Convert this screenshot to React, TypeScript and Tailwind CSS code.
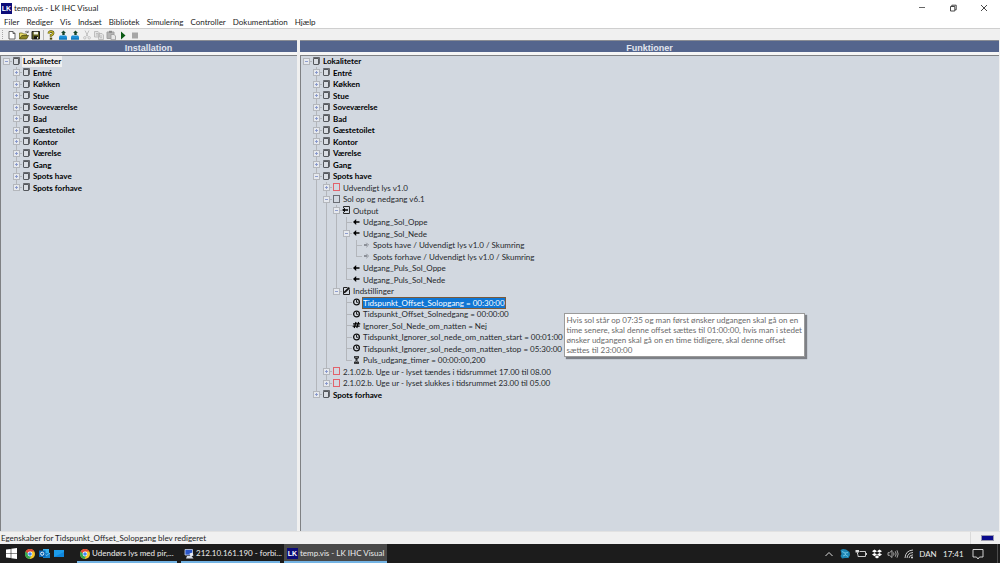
import React, { useState } from "react";

type IconName = "place" | "red" | "block" | "output" | "settings" | "arrow" | "link" | "clock" | "flag" | "timer";

interface TreeNode {
  id: string;
  label: string;
  icon: IconName;
  bold?: boolean;
  hint?: string[];
  children?: TreeNode[];
  expandable?: boolean;
}

interface Row {
  node: TreeNode;
  guides: boolean[];
  last: boolean;
}

const place = (label: string, extra: Partial<TreeNode> = {}): TreeNode => ({
  id: label,
  label,
  icon: "place",
  bold: true,
  expandable: true,
  ...extra,
});

const leaf = (label: string, icon: IconName, extra: Partial<TreeNode> = {}): TreeNode => ({
  id: label,
  label,
  icon,
  ...extra,
});

const roomNames = ["Entré", "Køkken", "Stue", "Soveværelse", "Bad", "Gæstetoilet", "Kontor", "Værelse", "Gang"];

const installation: TreeNode = place("Lokaliteter", {
  children: [...roomNames, "Spots have", "Spots forhave"].map((name) => place(name)),
});

const functions: TreeNode = place("Lokaliteter", {
  children: [
    ...roomNames.map((name) => place(name)),
    place("Spots have", {
      children: [
        leaf("Udvendigt lys v1.0", "red", { expandable: true }),
        leaf("Sol op og nedgang v6.1", "block", {
          children: [
            leaf("Output", "output", {
              children: [
                leaf("Udgang_Sol_Oppe", "arrow"),
                leaf("Udgang_Sol_Nede", "arrow", {
                  children: [
                    leaf("Spots have / Udvendigt lys v1.0 / Skumring", "link"),
                    leaf("Spots forhave / Udvendigt lys v1.0 / Skumring", "link"),
                  ],
                }),
                leaf("Udgang_Puls_Sol_Oppe", "arrow"),
                leaf("Udgang_Puls_Sol_Nede", "arrow"),
              ],
            }),
            leaf("Indstillinger", "settings", {
              children: [
                leaf("Tidspunkt_Offset_Solopgang = 00:30:00", "clock", {
                  hint: [
                    "Hvis sol står op 07:35 og man først ønsker udgangen skal gå on en",
                    "time senere, skal denne offset sættes til 01:00:00, hvis man i stedet",
                    "ønsker udgangen skal gå on en time tidligere, skal denne offset",
                    "sættes til 23:00:00",
                  ],
                }),
                leaf("Tidspunkt_Offset_Solnedgang = 00:00:00", "clock"),
                leaf("Ignorer_Sol_Nede_om_natten = Nej", "flag"),
                leaf("Tidspunkt_Ignorer_sol_nede_om_natten_start = 00:01:00", "clock"),
                leaf("Tidspunkt_Ignorer_sol_nede_om_natten_stop = 05:30:00", "clock"),
                leaf("Puls_udgang_timer = 00:00:00,200", "timer"),
              ],
            }),
          ],
        }),
        leaf("2.1.02.b. Uge ur - lyset tændes i tidsrummet 17.00 til 08.00", "red", { expandable: true }),
        leaf("2.1.02.b. Uge ur - lyset slukkes i tidsrummet 23.00 til 05.00", "red", { expandable: true }),
      ],
    }),
    place("Spots forhave"),
  ],
});

function flatten(node: TreeNode, closed: Set<string>, guides: boolean[] = [], last = true, level = 0): Row[] {
  const rows: Row[] = [{ node, guides, last }];
  const childGuides = level === 0 ? [false] : [...guides, !last];
  if (node.children && !closed.has(node.id)) {
    node.children.forEach((child, i, all) =>
      rows.push(...flatten(child, closed, childGuides, i === all.length - 1, level + 1)),
    );
  }
  return rows;
}

function NodeIcon({ name }: { name: IconName }) {
  return (
    <svg viewBox="1 0 9 10" className="h-[10px] w-[9px] shrink-0" fill="none" aria-hidden="true">
      {name === "place" && (
        <>
          <path d="M2.5 2.5V1.5H8.5V7.5L7.5 8.5V2.5" fill="#8b8e93" stroke="#66696e" />
          <rect x="2.5" y="2.5" width="5" height="6" rx=".4" fill="#d9dde3" stroke="#55585d" />
        </>
      )}
      {name === "red" && <rect x="2.5" y="1.500" width="6" height="7" stroke="#e2626b" />}
      {name === "block" && <rect x="2.5" y="1.500" width="6" height="7" stroke="#6a6d74" />}
      {name === "output" && (
        <>
          <path d="M2.5 3V1.5H8.500V8.500H2.500V7" stroke="#2a2a2a" />
          <path d="M1 5 4 2.700V4.200H7V5.800H4V7.300Z" fill="#000" />
        </>
      )}
      {name === "settings" && (
        <>
          <path d="M6.500 1.500H2.500V8.500H8.500V3.500" stroke="#222" />
          <path d="M2.500 7.500 3.400 5.300 7.700 1 9 2.300 4.700 6.600Z" fill="#111" />
        </>
      )}
      {name === "arrow" && <path d="M2 5 5.200 2V4.200H8.500V5.800H5.200V8Z" fill="#000" />}
      {name === "link" && (
        <path d="M3 4.500H6M3 5.500H6M5.300 2.800 7.500 5 5.300 7.200" stroke="#5d6066" strokeWidth=".6" />
      )}
      {name === "clock" && (
        <>
          <circle cx="5.500" cy="5" r="2.900" stroke="#111" strokeWidth="1.300" />
          <path d="M5.500 3V5.300H7.300" stroke="#111" strokeWidth=".9" />
        </>
      )}
      {name === "flag" && (
        <path d="M5 2 3.200 8M7.600 2 5.800 8M2.100 3.800H9.200M1.600 6.200H8.700" stroke="#000" strokeWidth="1.200" />
      )}
      {name === "timer" && (
        <>
          <path d="M3 1.800H8M3 8.200H8" stroke="#111" strokeWidth="1.200" />
          <path d="M3.700 2V3L5.500 5 3.700 7V8M7.300 2V3L5.500 5 7.300 7V8" stroke="#111" strokeWidth=".9" />
          <path d="M4 3H7L5.500 5ZM4 8 5.500 6.200 7 8Z" fill="#222" />
        </>
      )}
    </svg>
  );
}

function Branch({ row, open, onToggle }: { row: Row; open: boolean; onToggle: () => void }) {
  const root = row.guides.length === 0;
  const hasToggle = row.node.expandable || row.node.children;
  return (
    <span className="grid w-[10px] shrink-0 grid-cols-1 grid-rows-1">
      <span className="col-start-1 row-start-1 flex">
        <span className="w-[4px]" />
        <span className={`w-px ${root ? "" : "bg-[#b3b6bb]"} ${row.last ? "h-[6px]" : "h-full"}`} />
        <span className="mt-[5px] h-px w-[5px] bg-[#b3b6bb]" />
      </span>
      {hasToggle && (
        <button
          type="button"
          aria-label={`${open ? "Skjul" : "Vis"} ${row.node.label}`}
          onClick={onToggle}
          className="col-start-1 row-start-1 mt-[2px] ml-px flex size-[7px] items-center justify-center border border-[#b4b7bc] bg-[#e6e9ee]"
        >
          <svg viewBox="0 0 5 5" className="size-[5px]" aria-hidden="true">
            <path d={open ? "M1 2.500H4" : "M1 2.500H4M2.500 1V4"} stroke="#8595ca" strokeWidth=".9" />
          </svg>
        </button>
      )}
    </span>
  );
}

function Tree({ root, label, initial, highlight }: { root: TreeNode; label: string; initial: string; highlight: string }) {
  const [closed, setClosed] = useState<Set<string>>(new Set());
  const [selected, setSelected] = useState(initial);
  const toggle = (id: string) =>
    setClosed((prev) => {
      const next = new Set(prev);
      if (!next.delete(id)) next.add(id);
      return next;
    });

  return (
    <ul role="tree" aria-label={label} className="pl-px">
      {flatten(root, closed).map((row) => {
        const { node, guides } = row;
        const isSelected = node.id === selected;
        const open = !!node.children && !closed.has(node.id);
        return (
          <li
            key={node.id + guides.length}
            role="treeitem"
            aria-selected={isSelected}
            aria-level={guides.length + 1}
            className="flex whitespace-nowrap odd:h-[11px] even:h-[12px]"
          >
            {guides.map((line, i) => (
              <span key={i} className="flex w-[10px] shrink-0 pl-[4px]">
                {line && <span className="w-px bg-[#b3b6bb]" />}
              </span>
            ))}
            <Branch row={row} open={open} onToggle={() => toggle(node.id)} />
            <NodeIcon name={node.icon} />
            <button
              type="button"
              onClick={() => setSelected(node.id)}
              className={`ml-px px-px leading-[11px] ${node.bold ? "font-bold text-black" : ""} ${
                isSelected ? highlight : node.bold ? "" : "text-[#26282c]"
              }`}
            >
              {node.label}
            </button>
            {isSelected && node.hint && (
              <div className="relative">
                <div
                  role="tooltip"
                  className="absolute top-[16px] left-[58px] border border-[#9a9a9a] bg-white px-[2px] py-px text-[#6a6a6a] shadow-[2px_2px_1px_#7d8086]"
                >
                  {node.hint.map((line) => (
                    <p key={line} className="leading-[10px]">
                      {line}
                    </p>
                  ))}
                </div>
              </div>
            )}
          </li>
        );
      })}
    </ul>
  );
}

function Pane({ title, className, children }: { title: string; className: string; children: React.ReactNode }) {
  return (
    <section className={`flex flex-col ${className}`}>
      <h2 className="h-[12px] border-t border-[#8a8d94] bg-[#54658d] text-center font-['Liberation_Sans',sans-serif] text-[9px] leading-[14px] font-bold text-[#e2e6ef]">
        {title}
      </h2>
      <div className="h-[3px] bg-[#f6f6f6]" />
      <div className="flex-1 border-t border-l border-[#7f8184] bg-[#d2d8e0]">{children}</div>
    </section>
  );
}

function LkLogo({ className }: { className: string }) {
  return (
    <span
      aria-hidden="true"
      className={`flex shrink-0 items-center justify-center bg-[#0c0c78] font-['Liberation_Sans',sans-serif] text-[7px] leading-none font-bold text-white ${className}`}
    >
      LK
    </span>
  );
}

function ChromeIcon() {
  return (
    <svg viewBox="0 0 20 20" className="size-[10px] shrink-0" aria-hidden="true">
      <circle cx="10" cy="10" r="10" fill="#f7c52b" />
      <path d="M1.300 5A10 10 0 0 0 9 20L13.500 12 10 10Z" fill="#35a552" />
      <path d="M1.300 5A10 10 0 0 1 18.700 5H10L6 9Z" fill="#e2463a" />
      <circle cx="10" cy="10" r="4.800" fill="#fff" />
      <circle cx="10" cy="10" r="3.600" fill="#4285f4" />
    </svg>
  );
}

const controllerBox = (
  <>
    <path d="M2 7.500 3 6.500H9L10 7.500V10.500H2Z" fill="#1b8fd6" />
    <path d="M2 9.500H10V10.500H2Z" fill="#0c6cae" />
    <path d="M6.500 1.500 9 4H7.700V6H5.300V4H4Z" fill="#17452a" />
  </>
);

const toolbarItems: { label: string; disabled?: boolean; icon: React.ReactNode }[] = [
  {
    label: "Ny",
    icon: <path d="M3 2.500H7L9 4.500V10H3ZM7 2.500V4.500H9" fill="#fff" stroke="#555" strokeWidth=".9" />,
  },
  {
    label: "Åbn",
    icon: (
      <>
        <path d="M1.500 10V4H4.500L5.500 5H8.500V6.500" fill="#e8dd6a" stroke="#6d6a22" strokeWidth=".8" />
        <path d="M1.500 10 3.800 6.500H10.500L8.500 10Z" fill="#8a8420" stroke="#4d4b14" strokeWidth=".8" />
        <path d="M7 3Q8.500 1.500 10 3.300M10.200 1.800V3.500H8.500" fill="none" stroke="#444" strokeWidth=".7" />
      </>
    ),
  },
  {
    label: "Gem",
    icon: (
      <>
        <path d="M2 2.500H9.500V10H2Z" fill="#5d5d1c" stroke="#222" />
        <path d="M3.700 2.800H8V5.500H3.700Z" fill="#f2f2e4" />
        <path d="M4 7.200H8V10H4Z" fill="#111" />
        <path d="M7 8H8V9.700H7Z" fill="#ddd" />
      </>
    ),
  },
  {
    label: "Hjælp",
    icon: (
      <>
        <path d="M3.800 4.600Q3.800 2.500 6 2.500 8.200 2.500 8.200 4.200 8.200 5.300 6 6.300V7.800" fill="none" stroke="#4a4710" strokeWidth="2.400" />
        <path d="M3.800 4.600Q3.800 2.500 6 2.500 8.200 2.500 8.200 4.200 8.200 5.300 6 6.300V7.600" fill="none" stroke="#d2c52c" strokeWidth="1.200" />
        <path d="M4.800 8.600H7.200V10.600H4.800Z" fill="#4a470e" />
      </>
    ),
  },
  { label: "Hent fra controller", icon: controllerBox },
  { label: "Send til controller", icon: controllerBox },
  {
    label: "Klip",
    disabled: true,
    icon: (
      <path
        d="M4 1.500 7 7.500M8 1.500 5 7.500M5 8.800A1.200 1.200 0 1 1 3.800 7.600 1.200 1.200 0 0 1 5 8.800ZM9.400 8.800A1.200 1.200 0 1 1 8.200 7.600 1.200 1.200 0 0 1 9.400 8.800Z"
        fill="none"
        stroke="#b8b8b8"
        strokeWidth=".8"
      />
    ),
  },
  {
    label: "Kopier",
    disabled: true,
    icon: <path d="M1.500 2.500H5L6.500 4V8H1.500ZM5.500 4.500H9L10.500 6V10.500H5.500ZM3 4.500H5M3 6H5M7 7H9M7 8.700H9" fill="#e4e4e4" stroke="#b4b4b4" strokeWidth=".8" />,
  },
  {
    label: "Sæt ind",
    disabled: true,
    icon: (
      <>
        <path d="M2 3H9V9.500H2Z" fill="#b5b5b5" stroke="#a2a2a2" />
        <path d="M4 1.800H7V3.800H4Z" fill="#8c8c8c" />
        <path d="M6 5.500H9L10.500 7V10.700H6Z" fill="#e8e8e8" stroke="#999" strokeWidth=".8" />
      </>
    ),
  },
  { label: "Start simulering", icon: <path d="M4 2.500 8.500 6.500 4 10.500Z" fill="#0a5a14" /> },
  { label: "Stop simulering", disabled: true, icon: <path d="M3 3.500H9V9.500H3Z" fill="#a6a6a6" /> },
];

const menus = ["Filer", "Rediger", "Vis", "Indsæt", "Bibliotek", "Simulering", "Controller", "Dokumentation", "Hjælp"];

function TaskButton({ active, icon, width, children }: { active?: boolean; icon: React.ReactNode; width: string; children: React.ReactNode }) {
  return (
    <button
      type="button"
      className={`flex h-full items-center gap-[2px] border-b-2 border-[#74b4e4] pt-[2px] pl-[3px] text-left whitespace-nowrap ${width} ${
        active ? "bg-[#494949]" : ""
      }`}
    >
      {icon}
      <span>{children}</span>
    </button>
  );
}

function TrayIcon({ label, children }: { label: string; children: React.ReactNode }) {
  return (
    <button type="button" aria-label={label} className="w-[16px]">
      <svg viewBox="0 0 16 12" className="h-[12px] w-[16px]" fill="none" stroke="#dcdcdc" strokeWidth="1" aria-hidden="true">
        {children}
      </svg>
    </button>
  );
}

export default function App() {
  return (
    <div className="flex h-screen flex-col overflow-hidden bg-[#f0f0f0] font-[Lato,sans-serif] text-[8px] leading-[11px] text-[#1c1c1c]">
      <header className="flex h-[16px] shrink-0 items-center bg-white">
        <LkLogo className="ml-px size-[11px]" />
        <h1 className="ml-[2px] flex-1">temp.vis - LK IHC Visual</h1>
        <div className="flex">
          <button type="button" aria-label="Minimer" className="flex w-[30px] justify-center">
            <svg viewBox="0 0 8 8" className="size-[8px]" stroke="#555" strokeWidth=".9" fill="none">
              <path d="M1 3.500H7" />
            </svg>
          </button>
          <button type="button" aria-label="Gendan" className="flex w-[31px] justify-center">
            <svg viewBox="0 0 8 8" className="size-[8px]" stroke="#333" strokeWidth=".9" fill="none">
              <path d="M1.500 2.500H5.800V7H1.500ZM2.800 2.300V1.200H7.200V5.800H6" />
            </svg>
          </button>
          <button type="button" aria-label="Luk" className="flex w-[32px] justify-center">
            <svg viewBox="0 0 8 8" className="size-[8px]" stroke="#333" strokeWidth=".9" fill="none">
              <path d="M1 1 7 7M7 1 1 7" />
            </svg>
          </button>
        </div>
      </header>

      <nav aria-label="Menu" className="flex h-[12px] shrink-0 items-center gap-[7px] bg-white pl-[4px]">
        {menus.map((m) => (
          <button key={m} type="button">
            {m}
          </button>
        ))}
      </nav>

      <div role="toolbar" aria-label="Værktøjslinje" className="flex h-[12px] shrink-0 items-center border-t border-[#cfcfcf]">
        <span className="mr-[3px] ml-[2px] h-[9px] border-l border-dotted border-[#a8a8a8]" />
        {toolbarItems.map((item, i) => (
          <React.Fragment key={item.label}>
            {i === 3 && <span className="mx-px h-[10px] w-px bg-[#b8b8b8]" />}
            <button type="button" aria-label={item.label} disabled={item.disabled} className="size-[12px]">
              <svg viewBox="0 0 12 12" className="size-[12px]" aria-hidden="true">
                {item.icon}
              </svg>
            </button>
          </React.Fragment>
        ))}
      </div>

      <main className="flex min-h-0 flex-1">
        <Pane title="Installation" className="w-[30%] pr-[3px]">
          <Tree root={installation} label="Installation" initial="Lokaliteter" highlight="bg-[#f0f0f0]" />
        </Pane>
        <Pane title="Funktioner" className="flex-1 pr-px">
          <Tree
            root={functions}
            label="Funktioner"
            initial="Tidspunkt_Offset_Solopgang = 00:30:00"
            highlight="bg-[#0f76d4] text-white outline-1 -outline-offset-1 outline-[#7a5a3a]"
          />
        </Pane>
      </main>

      <footer className="flex h-[13px] shrink-0 items-center border-t border-[#e2e2e2] pl-px">
        <p className="flex-1">Egenskaber for Tidspunkt_Offset_Solopgang blev redigeret</p>
        <div className="flex h-full items-center border-l border-[#dadada] pr-[6px] pl-[10px]">
          <span className="h-[6px] w-[13px] border border-[#9a9ab0] bg-[#0a0a8c]" />
        </div>
      </footer>

      <div className="flex h-[19px] shrink-0 items-center bg-[#1c1c1c] text-[#ececec]">
        <button type="button" aria-label="Start" className="flex w-[23px] justify-center">
          <svg viewBox="0 0 11 11" className="size-[11px]" fill="#fff" aria-hidden="true">
            <path d="M0 1.600 4.700.9V5.200H0ZM5.300.8 11 0V5.200H5.300ZM0 5.800H4.700V10.100L0 9.400ZM5.300 5.800H11V11L5.300 10.200Z" />
          </svg>
        </button>
        <button type="button" aria-label="Chrome" className="flex w-[14px] justify-center">
          <ChromeIcon />
        </button>
        <button type="button" aria-label="Outlook" className="flex w-[15px] justify-center">
          <svg viewBox="0 0 11 11" className="size-[11px]" aria-hidden="true">
            <path d="M4 1H10V6H4Z" fill="#35b1f0" />
            <path d="M4 5 11 5V10H4Z" fill="#1583d0" />
            <path d="M4 5 7.500 7.500 11 5" fill="none" stroke="#8fd4fa" strokeWidth=".7" />
            <path d="M0 2.500H6.500V9H0Z" fill="#0a64b4" />
            <circle cx="3.200" cy="5.700" r="1.600" fill="none" stroke="#fff" strokeWidth=".9" />
          </svg>
        </button>
        <button type="button" aria-label="Mail" className="flex w-[13px] justify-center">
          <svg viewBox="0 0 10 8" className="h-[8px] w-[10px]" aria-hidden="true">
            <path d="M0 0H10V7H0Z" fill="#1c9bea" />
            <path d="M0 7 10 2V7Z" fill="#0f86dc" />
          </svg>
        </button>
        <div className="ml-[12px] flex h-full gap-[4px]">
          <TaskButton width="w-[100px]" icon={<ChromeIcon />}>
            Udendørs lys med pir,...
          </TaskButton>
          <TaskButton
            width="w-[99px]"
            icon={
              <svg viewBox="0 0 10 10" className="size-[10px] shrink-0" aria-hidden="true">
                <path d="M1 .5H8.500V6H1Z" fill="#2a56c8" stroke="#c8d4ee" strokeWidth=".8" />
                <path d="M3 7H7.500L9.500 9.500H2Z" fill="#d4dae6" />
                <path d="M5.500 4.500 8.500 3.500 9.500 6.500 6.500 7.500Z" fill="#e8ecf4" />
              </svg>
            }
          >
            212.10.161.190 - forbi...
          </TaskButton>
          <TaskButton active width="w-[103px]" icon={<LkLogo className="size-[11px]" />}>
            temp.vis - LK IHC Visual
          </TaskButton>
        </div>

        <div className="ml-auto flex items-center">
          <TrayIcon label="Vis skjulte ikoner">
            <path d="M4.500 8 8 4.500 11.500 8" />
          </TrayIcon>
          <TrayIcon label="Synkronisering">
            <path d="M3.500 2 6 1 9 1.500 12.500 4 13 7 11.500 10 8 10 5 10.500 3.500 8 4.500 6Z" fill="#1d86b4" stroke="none" />
            <path d="M5 3.500 8 5 11 4.500M6 8 8.500 7 11 8.500M8 5 8.500 7" stroke="#7fd0ee" strokeWidth=".8" />
          </TrayIcon>
          <TrayIcon label="Batteri">
            <path d="M6.500 3.500H12.500V8.500H5V6.500M13.500 5V7" strokeWidth=".9" />
            <path d="M2.500 2H6V4.500H2.500Z" fill="#dcdcdc" stroke="none" />
            <path d="M4.500 4.500V6.500" />
          </TrayIcon>
          <TrayIcon label="Dropbox">
            <path
              d="M5.500 1.500 8 3.200 5.500 4.800 3 3.200ZM10.500 1.500 13 3.200 10.500 4.800 8 3.200ZM5.500 4.900 8 6.500 5.500 8.200 3 6.500ZM10.500 4.900 13 6.500 10.500 8.200 8 6.500ZM8 7.300 10.300 8.900 8 10.500 5.700 8.900Z"
              fill="#fff"
              stroke="none"
            />
          </TrayIcon>
          <TrayIcon label="Lydstyrke">
            <path d="M3 4.700H4.500L7 2.500V9.500L4.500 7.300H3ZM8.500 4.500Q9.500 6 8.500 7.500M10.300 3.300Q12 6 10.300 8.700M12 2.300Q14.300 6 12 9.700" strokeWidth=".7" />
          </TrayIcon>
          <TrayIcon label="Netværk">
            <path d="M4 10Q4.500 2.500 12 2M6 10Q6.500 5 12 4.500M8 10Q8.500 7 12 6.800" strokeWidth=".9" />
            <circle cx="11" cy="9.500" r="1" fill="#e4e4e4" stroke="none" />
          </TrayIcon>
          <button type="button" className="ml-[2px] w-[18px] pt-px">
            DAN
          </button>
          <time className="ml-[6px] w-[20px] pt-px text-center">17:41</time>
          <button type="button" aria-label="Meddelelser" className="ml-[9px] flex w-[12px] justify-center">
            <svg viewBox="0 0 12 12" className="size-[12px]" fill="none" stroke="#e4e4e4" aria-hidden="true">
              <path d="M1 1.500H11V9H7.500L6 11 4.500 9H1Z" strokeWidth=".9" />
            </svg>
          </button>
          <span className="mr-[2px] ml-[13px] h-[19px] w-px bg-[#4c4c4c]" />
        </div>
      </div>
    </div>
  );
}
